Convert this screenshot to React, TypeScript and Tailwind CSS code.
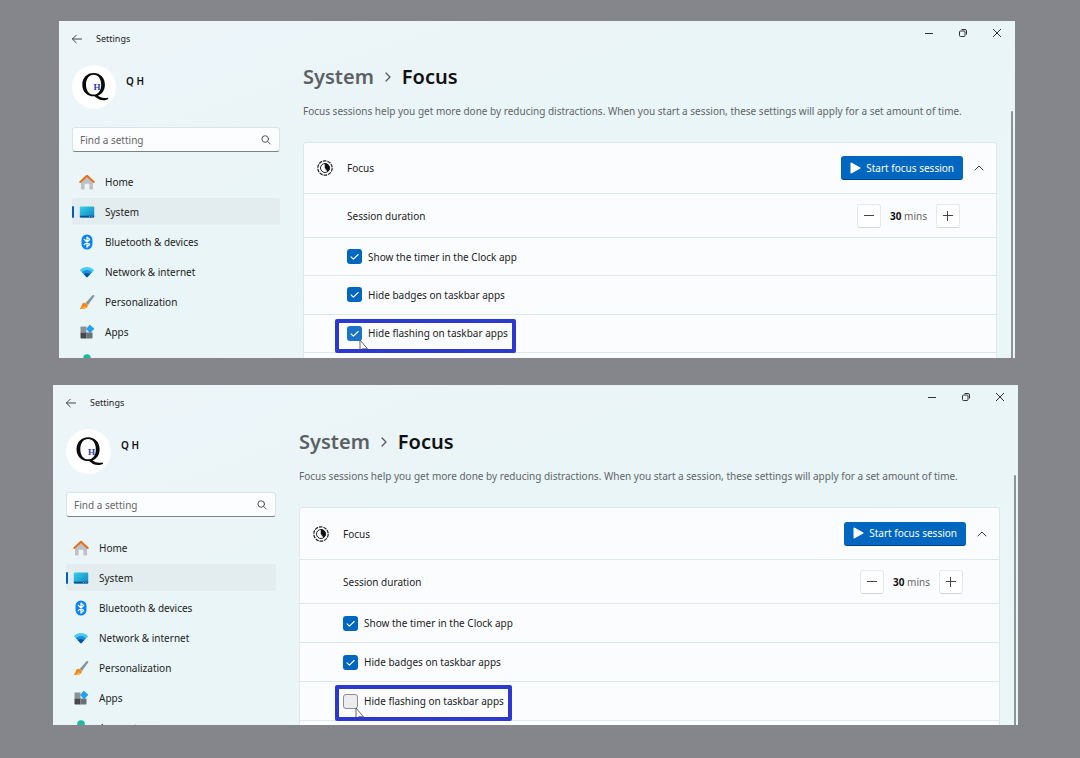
import { useId, useState } from 'react';
import type { ReactNode } from 'react';

function HomeIcon() {
  return (
    <svg viewBox="0 0 16 16" className="size-4">
      <path d="M2 7.500 8 2.400l6 5.100v7.300a.6.6 0 0 1-.6.6H10.400V10.400a.6.6 0 0 0-.6-.6H6.200a.6.6 0 0 0-.6.600v5H2.600a.6.6 0 0 1-.6-.6Z" fill="#bfc1c5" />
      <path d="M1.300 8 8 1.700 14.700 8" fill="none" stroke="#e2711d" strokeWidth="2" strokeLinecap="round" strokeLinejoin="round" />
    </svg>
  );
}

function SystemIcon() {
  const id = useId();
  return (
    <svg viewBox="0 0 16 16" className="size-4">
      <defs>
        <linearGradient id={id} x1="0" y1="0" x2="1" y2="1">
          <stop offset="0" stopColor="#35d3e6" />
          <stop offset="1" stopColor="#1180c4" />
        </linearGradient>
      </defs>
      <rect x="0.8" y="2.4" width="14.4" height="11.2" rx="1" fill={`url(#${id})`} />
      <path d="M.8 11.8h14.4v.8a1 1 0 0 1-1 1H1.800a1 1 0 0 1-1-1Z" fill="#0b4f8a" />
      <path d="M10 12.7h1M12.500 12.700h1" stroke="#8fd6f5" strokeWidth=".8" />
    </svg>
  );
}

function BluetoothIcon() {
  return (
    <svg viewBox="0 0 16 16" className="size-4">
      <rect x="2.500" y="0.400" width="11" height="15.200" rx="5.500" fill="#0a84f2" />
      <path d="m5.200 5.300 5.400 5.200L8 13V3l2.600 2.500-5.400 5.200" fill="none" stroke="#fff" strokeWidth="1.200" strokeLinejoin="round" strokeLinecap="round" />
    </svg>
  );
}

function NetworkIcon() {
  return (
    <svg viewBox="0 0 16 16" className="size-4">
      <path d="M.8 6.200C4.800 1.900 11.200 1.900 15.200 6.200L8.500 13a.7.7 0 0 1-1 0Z" fill="#4ccbf2" />
      <path d="M2.900 8.300c2.900-3 7.300-3 10.200 0L8.500 13a.7.7 0 0 1-1 0Z" fill="#1b91dc" />
      <path d="M4.900 10.300c1.800-1.800 4.400-1.800 6.200 0L8.500 13a.7.7 0 0 1-1 0Z" fill="#0b4fa0" />
    </svg>
  );
}

function BrushIcon() {
  return (
    <svg viewBox="0 0 16 16" className="size-4">
      <path d="M14.900 1.100c.5.400.5 1 .1 1.700L9 11 6.600 8.900 13.300 1.600c.500-.600 1.100-.9 1.600-.5Z" fill="#8a939c" />
      <path d="M6.200 8.900 8.800 11c.2 2.600-2.300 4.400-7.600 3.900-.4 0-.4-.5-.1-.7 1.300-.8 1.200-1.800 1.700-3.200.6-1.700 2-2.500 3.400-2.100Z" fill="#f2871f" />
      <path d="M1.200 14.900c1.900-.3 3.400-1.200 4.400-2.900l2 1.700c-1.400 1.100-3.500 1.500-6.400 1.200Z" fill="#fbb545" />
    </svg>
  );
}

function AppsIcon() {
  return (
    <svg viewBox="0 0 16 16" className="size-4">
      <path d="M1.500 3.300c0-.5.3-.8.8-.8H7.500V8.500h-6Z" fill="#8c9197" />
      <path d="M1.500 8.500h6v6H2.300a.8.800 0 0 1-.8-.8Z" fill="#45494d" />
      <path d="M7.500 8.500h6v5.200c0 .5-.3.800-.8.800H7.500Z" fill="#6c7176" />
      <path d="m11 .9 3.900 3.300c.4.300.4.800 0 1.100L11.600 8.800c-.3.300-.8.300-1.100 0L7.600 5.600c-.3-.3-.3-.8 0-1.100L10.400 1c.2-.2.400-.3.600-.1Z" fill="#22a2ec" />
    </svg>
  );
}

function AccountsIcon() {
  return (
    <svg viewBox="0 0 16 16" className="size-4">
      <circle cx="8" cy="4" r="3.800" fill="#1fb89a" />
      <path d="M1.800 11.500c0-1.200.8-2 2-2h8.400c1.200 0 2 .8 2 2 0 2.500-2.400 4.200-6.200 4.200s-6.200-1.700-6.200-4.200Z" fill="#148a79" />
    </svg>
  );
}

function FocusIcon() {
  return (
    <svg viewBox="0 0 16 16" className="size-4" fill="none">
      <circle cx="8" cy="8" r="7.200" stroke="#222" strokeWidth="1.200" strokeDasharray="3.600 .924" />
      <circle cx="8" cy="8" r="4.500" stroke="#222" strokeWidth="1" />
      <path d="M8 3.500a4.500 4.500 0 0 1 2.700 8.100L8 8Z" fill="#111" stroke="#111" strokeWidth=".5" />
    </svg>
  );
}

function AvatarMark() {
  return (
    <svg viewBox="0 0 44 44" className="size-full" role="img" aria-label="Q H">
      <circle cx="22" cy="22" r="22" fill="#fff" />
      <path
        fillRule="evenodd"
        d="M21.600 8c6.700 0 11.300 4.900 11.300 11.700 0 5.300-2.700 9.300-7 10.900 2.200 2.200 5.600 2.900 9.900 2.200l.6 1.100c-1.700.9-3.200 1.400-4.900 1.400-4.100 0-6.300-1.800-9-4C15.200 31.600 10.300 26.700 10.300 19.700 10.300 12.900 14.900 8 21.600 8Zm0 1.700c-4.500 0-7.600 3.900-7.600 10s3.100 9.900 7.600 9.900 7.600-3.800 7.600-9.900-3.100-10-7.600-10Z"
        fill="#0a0a0a"
      />
      <text x="21.500" y="25" fontFamily="Liberation Serif, serif" fontSize="9" fontWeight="700" fill="#2a37c4">H</text>
    </svg>
  );
}

function Pointer() {
  return (
    <svg viewBox="0 0 10 14" className="h-3.5 w-2.5" aria-hidden="true">
      <path d="M1 1v11.500l2.800-2.700h4.700Z" fill="#fff" stroke="#555" strokeWidth=".9" strokeLinejoin="round" />
    </svg>
  );
}

const navItems: { label: string; icon: ReactNode }[] = [
  { label: 'Home', icon: <HomeIcon /> },
  { label: 'System', icon: <SystemIcon /> },
  { label: 'Bluetooth & devices', icon: <BluetoothIcon /> },
  { label: 'Network & internet', icon: <NetworkIcon /> },
  { label: 'Personalization', icon: <BrushIcon /> },
  { label: 'Apps', icon: <AppsIcon /> },
  { label: 'Accounts', icon: <AccountsIcon /> },
];

function CheckRow({ label, initial, marker, hover = false }: { label: string; initial: boolean; marker?: string; hover?: boolean }) {
  const [checked, setChecked] = useState(initial);
  return (
    <div className="flex flex-1 items-center border-t border-[#dce9eb] pl-[43px]">
      <label className="relative flex items-center gap-1.5">
        <span className="relative size-[15px]">
          <input
            type="checkbox"
            checked={checked}
            onChange={(e) => setChecked(e.target.checked)}
            className={`block size-[15px] appearance-none rounded-[3px] border border-[#8b8d90] bg-[#ededef] checked:border-transparent ${hover ? 'checked:bg-[#1a73c4]' : 'checked:bg-[#0067c0]'}`}
          />
          {checked && (
            <svg viewBox="0 0 15 15" className="pointer-events-none absolute inset-0 size-[15px]" fill="none">
              <path d="m4 7.800 2.400 2.400L11.200 5.500" stroke="#fff" strokeWidth="1.100" strokeLinecap="round" strokeLinejoin="round" />
            </svg>
          )}
        </span>
        {label}
        {marker && (
          <>
            <span className="pointer-events-none absolute top-3.5 left-3">
              <Pointer />
            </span>
            <span className={`pointer-events-none absolute rounded-[2px] border-4 border-[#2c39cf] ${marker}`} />
          </>
        )}
      </label>
    </div>
  );
}

type Size = {
  frame: string;
  rail: string;
  avatar: string;
  nav: string;
  main: string;
  head: string;
  duration: string;
  checks: string;
  marker: string;
};

function SettingsWindow({ size, hideFlashing }: { size: Size; hideFlashing: boolean }) {
  return (
    <section className={`flex flex-col overflow-hidden bg-linear-to-br from-[#edf5f9] via-[#e9f5f7] to-[#ebf6f7] ${size.frame}`}>
      <header className="flex h-9 shrink-0 items-start justify-between pr-2">
        <div className="flex h-9 items-center gap-[13px] pl-3">
          <button aria-label="Back" className="flex">
            <svg viewBox="0 0 12 12" className="size-3" fill="none" stroke="#444" strokeLinecap="round" strokeLinejoin="round">
              <path d="M10.500 6H1.500M5.200 2.200 1.400 6l3.800 3.800" />
            </svg>
          </button>
          <span className="text-[9px] text-[#222]">Settings</span>
        </div>
        <div className="flex h-6 items-center gap-3.5 text-[#333]">
          <button aria-label="Minimize" className="flex w-5 justify-center">
            <svg viewBox="0 0 10 10" className="size-2.5" stroke="currentColor"><path d="M1 5.500h8" /></svg>
          </button>
          <button aria-label="Restore" className="flex w-5 justify-center">
            <svg viewBox="0 0 10 10" className="size-2.5" fill="none" stroke="currentColor">
              <rect x="1.500" y="3" width="5.500" height="5.500" rx="1" />
              <path d="M3.500 1.500H7A1.500 1.500 0 0 1 8.500 3v3.500" />
            </svg>
          </button>
          <button aria-label="Close" className="flex w-5 justify-center">
            <svg viewBox="0 0 10 10" className="size-2.5" stroke="currentColor"><path d="m1 1 8 8M9 1 1 9" /></svg>
          </button>
        </div>
      </header>

      <div className="flex min-h-0 flex-1">
        <aside className={`shrink-0 pt-2 pl-[13px] ${size.rail}`}>
          <div className="flex gap-2.5">
            <div className={size.avatar}><AvatarMark /></div>
            <span className="pt-2 leading-4 font-semibold text-[#111]">Q H</span>
          </div>
          <div className="mt-[18px] flex h-[25px] items-center rounded-[3px] border border-[#d8e4e8] border-b-[#7c8487] bg-[#fbfdfe] px-[7px]">
            <input type="text" aria-label="Find a setting" placeholder="Find a setting" className="min-w-0 flex-1 bg-transparent outline-none placeholder:text-[#666]" />
            <svg viewBox="0 0 12 12" className="size-3" fill="none" stroke="#555" strokeLinecap="round">
              <circle cx="5.200" cy="5" r="3.300" />
              <path d="m7.700 7.500 2.600 2.600" />
            </svg>
          </div>
          <nav className={`flex flex-col gap-[3px] ${size.nav}`}>
            {navItems.map(({ label, icon }) => {
              const active = label === 'System';
              return (
                <a key={label} href="#" aria-current={active ? 'page' : undefined} className={`flex h-[27px] shrink-0 items-center rounded-[3px] ${active ? 'bg-[#e3ecee]' : ''}`}>
                  <span className={`h-3 w-0.5 rounded-full ${active ? 'bg-[#0060b8]' : ''}`} />
                  <span className="mr-2.5 ml-[5px]">{icon}</span>
                  {label}
                </a>
              );
            })}
          </nav>
        </aside>

        <main className={`flex min-w-0 flex-1 flex-col pr-3.5 pl-[23px] ${size.main}`}>
          <h1 className="flex h-7 items-center gap-2.5 text-[20px] font-semibold text-[#111]">
            <span className="text-[#5b6163]">System</span>
            <svg viewBox="0 0 8 12" className="h-3 w-2" fill="none" stroke="#555" strokeWidth="1.200" strokeLinecap="round" strokeLinejoin="round">
              <path d="m2 2 4 4-4 4" />
            </svg>
            <span>Focus</span>
          </h1>
          <p className="mt-4.5 leading-4 whitespace-nowrap text-[#5f6567]">
            Focus sessions help you get more done by reducing distractions. When you start a session, these settings will apply for a set amount of time.
          </p>

          <div className="mt-[23px] flex shrink-0 flex-col rounded-t-[3px] border border-b-0 border-[#dce9eb] bg-[#fbfcfe]">
            <div className={`flex items-center pr-[11px] pl-[13px] ${size.head}`}>
              <FocusIcon />
              <h2 className="ml-3.5 flex-1">Focus</h2>
              <button className="flex h-6 items-center gap-[5px] rounded-[3px] border-b border-[#00458a] bg-[#0067c0] px-[9px] text-white">
                <svg viewBox="0 0 11 12" className="h-3 w-[11px]" fill="currentColor"><path d="M.5 1c0-.5.400-.7.800-.5l9 5c.4.200.4.700 0 1l-9 5c-.4.200-.8 0-.8-.5Z" /></svg>
                Start focus session
              </button>
              <button aria-label="Collapse" className="ml-2.5 flex">
                <svg viewBox="0 0 12 12" className="size-3" fill="none" stroke="#444" strokeLinecap="round" strokeLinejoin="round"><path d="M2 8l4-4 4 4" /></svg>
              </button>
            </div>
            <div className={`flex items-center border-t border-[#dce9eb] pr-9 pl-[43px] ${size.duration}`}>
              <span className="flex-1">Session duration</span>
              <button aria-label="Decrease" className="flex size-6 items-center justify-center rounded-[3px] border border-[#e6e8ea] border-b-[#d2d5d8] bg-white text-[#444]">
                <svg viewBox="0 0 12 12" className="size-3" stroke="currentColor"><path d="M1 5.500h10" /></svg>
              </button>
              <span className="mx-[9px] text-[#666]"><b className="font-bold text-[#111]">30</b> mins</span>
              <button aria-label="Increase" className="flex size-6 items-center justify-center rounded-[3px] border border-[#e6e8ea] border-b-[#d2d5d8] bg-white text-[#444]">
                <svg viewBox="0 0 12 12" className="size-3" stroke="currentColor"><path d="M1 5.500h10M5.500 1v10" /></svg>
              </button>
            </div>
            <div className={`flex flex-col ${size.checks}`}>
              <CheckRow label="Show the timer in the Clock app" initial />
              <CheckRow label="Hide badges on taskbar apps" initial />
              <CheckRow label="Hide flashing on taskbar apps" initial={hideFlashing} marker={size.marker} hover />
            </div>
            <div className="h-10 border-t border-[#dce9eb]" />
          </div>
        </main>
        <div className="mt-[54px] mr-0.5 w-0.5 shrink-0 rounded-t-full bg-[#8b9598]" />
      </div>
    </section>
  );
}

const first: Size = {
  frame: 'mr-[65px] ml-[59px] h-[337px]',
  rail: 'w-[221px]',
  avatar: 'size-11',
  nav: 'mt-4',
  main: 'pt-3',
  head: 'h-[50px]',
  duration: 'h-11',
  checks: 'h-[115px]',
  marker: '-top-1.5 -right-2 -bottom-3 -left-3',
};

const second: Size = {
  frame: 'mr-[62px] ml-[53px] h-[340px]',
  rail: 'w-[223px]',
  avatar: 'size-[45px]',
  nav: 'mt-[17px]',
  main: 'pt-[13px]',
  head: 'h-[51px]',
  duration: 'h-11',
  checks: 'h-[117px]',
  marker: '-top-2 -right-2 -bottom-3 -left-2',
};

export default function App() {
  return (
    <div className="flex min-h-screen flex-col gap-[27px] bg-[#85868b] pt-[21px] pb-8 font-['Noto_Sans','Open_Sans',sans-serif] text-[10px] leading-4 text-[#222]">
      <SettingsWindow size={first} hideFlashing />
      <SettingsWindow size={second} hideFlashing={false} />
    </div>
  );
}
